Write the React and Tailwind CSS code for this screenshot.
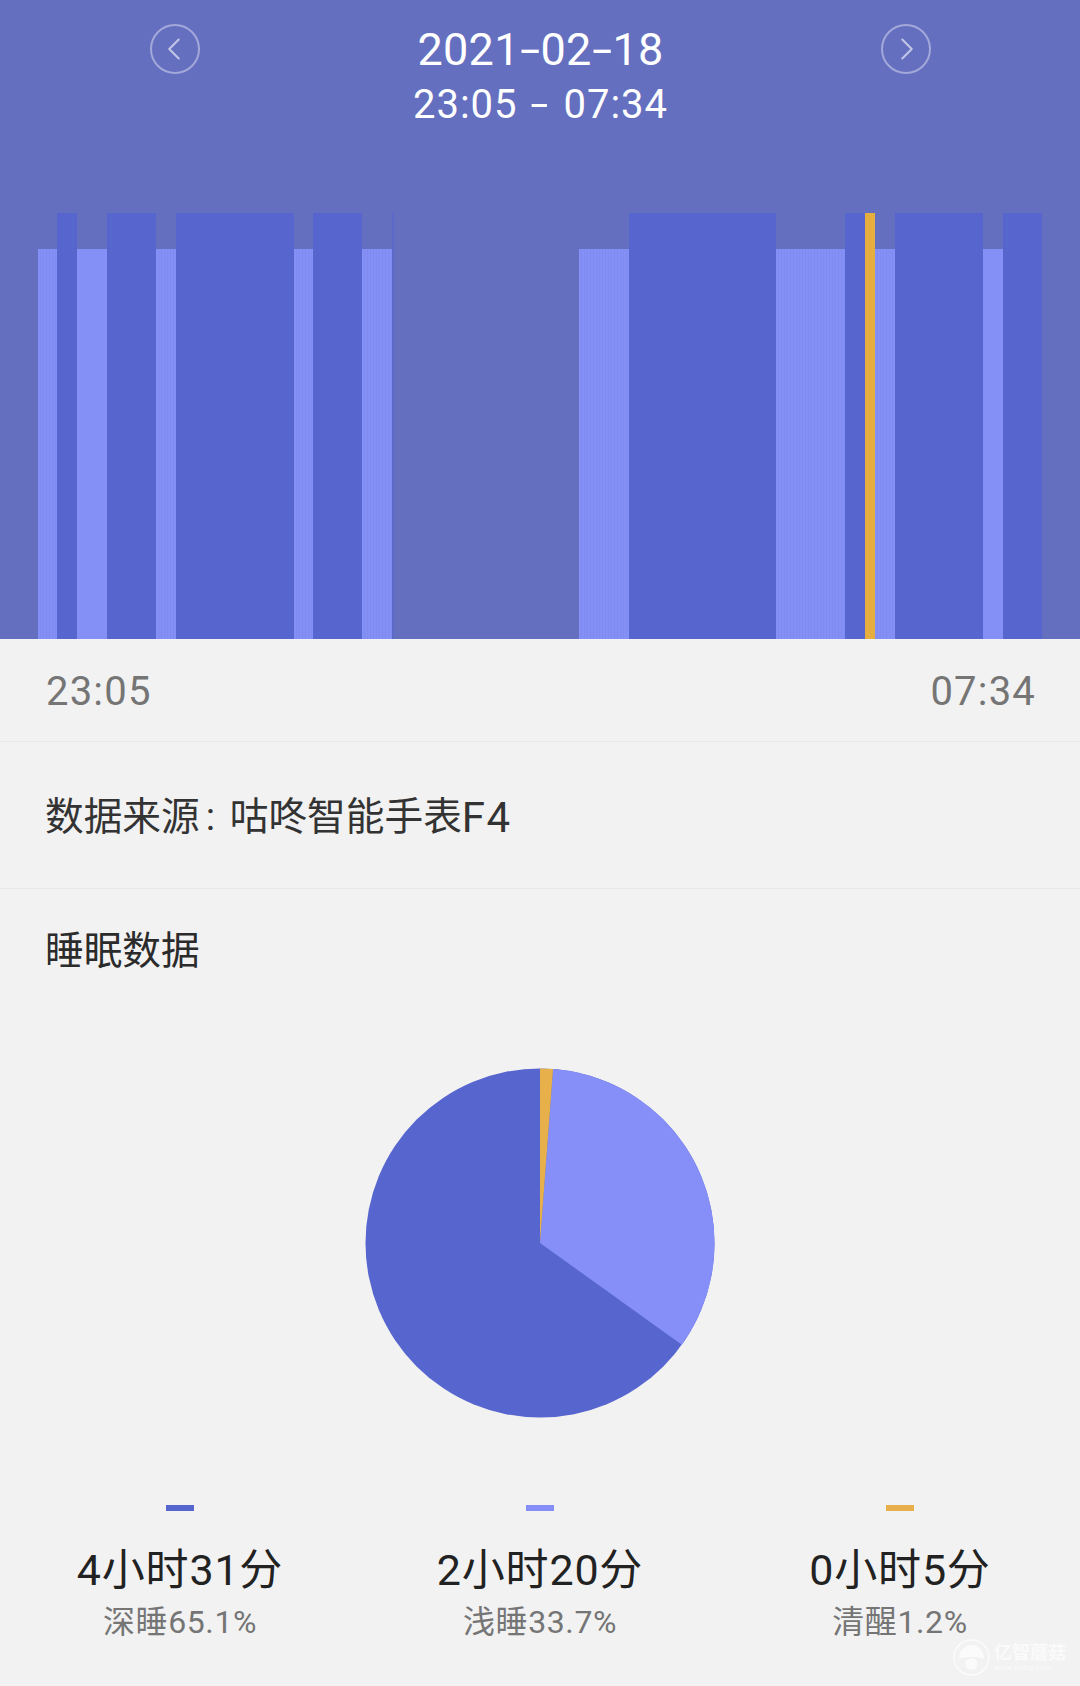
import { ChevronLeft, ChevronRight } from "lucide-react";

const FONT = "font-['Roboto','Noto_Sans_CJK_SC',sans-serif]";

// width of each sleep block in the chart, in px
const segments = [
  { type: "gap", w: 38 },
  { type: "striped", w: 19 },
  { type: "deep", w: 20 },
  { type: "light", w: 30 },
  { type: "deep", w: 49 },
  { type: "striped", w: 20 },
  { type: "deep", w: 118 },
  { type: "striped", w: 19 },
  { type: "deep", w: 49 },
  { type: "striped", w: 30 },
  { type: "thin", w: 2 },
  { type: "gap", w: 185 },
  { type: "striped", w: 50 },
  { type: "deep", w: 147 },
  { type: "striped", w: 69 },
  { type: "deep", w: 20 },
  { type: "awake", w: 10 },
  { type: "striped", w: 20 },
  { type: "deep", w: 88 },
  { type: "light", w: 20 },
  { type: "deep", w: 39 },
];

const segmentClass = {
  gap: "h-0",
  light: "h-[390px] bg-[#8590f6]",
  striped:
    "h-[390px] bg-[repeating-linear-gradient(90deg,#8590f6_0px,#8590f6_2px,#7f8bef_2px,#7f8bef_3px)]",
  deep: "h-[426px] bg-[#5765cf]",
  thin: "h-[426px] bg-[#5c69c9]",
  awake: "h-[426px] bg-[#e6ae3e]",
};

const stats = [
  { color: "bg-[#5765cf]", value: "4小时31分", label: "深睡65.1%" },
  { color: "bg-[#858ff7]", value: "2小时20分", label: "浅睡33.7%" },
  { color: "bg-[#e8b04a]", value: "0小时5分", label: "清醒1.2%" },
];

const NavButton = ({ children }) => (
  <div className="flex h-[50px] w-[50px] items-center justify-center rounded-full border-2 border-white/40 text-white/60">
    {children}
  </div>
);

const Dash = () => <span className="mx-[4px] inline-block scale-x-[1.6]">-</span>;

const Pie = () => (
  <svg width="350" height="350" viewBox="-175 -175 350 350" className="mx-auto">
    <circle cx="0" cy="0" r="174.5" fill="#5765cf" />
    <path d="M0 0 L13.1 -174 A174.5 174.5 0 0 1 141.8 101.7 Z" fill="#858ff7" />
    <path d="M0 0 L0 -174.5 A174.5 174.5 0 0 1 13.1 -174 Z" fill="#e8b04a" />
  </svg>
);

const Watermark = () => (
  <div className="absolute left-[953px] top-[1639px] flex items-center gap-[4px] text-white/70">
    <svg width="37" height="37" viewBox="0 0 37 37" fill="none">
      <circle cx="18.5" cy="18.5" r="17.5" stroke="currentColor" strokeWidth="1.5" />
      <path d="M6 20C6 11 12 6 18.5 6S31 11 31 20C27 18 23 18 18.5 18S10 18 6 20Z" fill="currentColor" />
      <circle cx="18.5" cy="25" r="6" fill="currentColor" />
    </svg>
    <div className="flex flex-col items-start">
      <span className="text-[18px] font-bold leading-[20px]">亿智蘑菇</span>
      <span className="text-[8px] leading-[10px]">www.yzmg.com</span>
    </div>
  </div>
);

export default function App() {
  return (
    <div className={`relative h-[1686px] w-[1080px] overflow-hidden bg-[#f2f2f2] ${FONT}`}>
      <header className="flex h-[639px] flex-col justify-between bg-[#656fc0]">
        <div className="flex items-start justify-between pl-[150px] pr-[149px] pt-[24px] text-white">
          <NavButton>
            <ChevronLeft size={38} strokeWidth={1.3} className="-ml-[2px]" />
          </NavButton>
          <div className="flex flex-col items-center">
            <div className="pt-[1px] text-[45px] leading-[50px] tracking-[0.3px]">
              2021<Dash />02<Dash />18
            </div>
            <div className="mt-[6px] whitespace-pre text-[40px] leading-[48px] tracking-[1px] [word-spacing:2px]">
              23:05 <Dash /> 07:34
            </div>
          </div>
          <NavButton>
            <ChevronRight size={38} strokeWidth={1.3} className="ml-[2px]" />
          </NavButton>
        </div>
        <div className="flex items-end">
          {segments.map((s, i) => (
            <div key={i} className={segmentClass[s.type]} style={{ width: s.w }} />
          ))}
        </div>
      </header>

      <div className="flex h-[103px] items-center justify-between border-b border-[#e8e8e8] pl-[46px] pr-[44px] pt-[4px] text-[40px] tracking-[1.2px] text-[#757575]">
        <span>23:05</span>
        <span>07:34</span>
      </div>

      <div className="flex h-[147px] items-center whitespace-pre border-b border-[#e8e8e8] px-[45px] pt-[4px] text-[38.7px] text-[#333333]">
        数据来源<span className="ml-[6px] mr-[5px]">: </span>咕咚智能手表<span className="text-[42px] tracking-[1.5px]">F4</span>
      </div>

      <h2 className="mt-[42px] px-[45px] text-[38.7px] font-normal leading-[39px] text-[#2b2b2b]">睡眠数据</h2>

      <div className="mt-[98px]">
        <Pie />
      </div>

      <div className="mt-[87px] grid grid-cols-3">
        {stats.map((s) => (
          <div key={s.label} className="flex flex-col items-center">
            <div className={`h-[6px] w-[28px] ${s.color}`} />
            <div className="mt-[34px] text-[43px] leading-[50px] tracking-[0.8px] text-[#222222]">{s.value}</div>
            <div className="mt-[7px] text-[32px] leading-[40px] tracking-[0.6px] text-[#757575]">{s.label}</div>
          </div>
        ))}
      </div>

      <Watermark />
    </div>
  );
}
